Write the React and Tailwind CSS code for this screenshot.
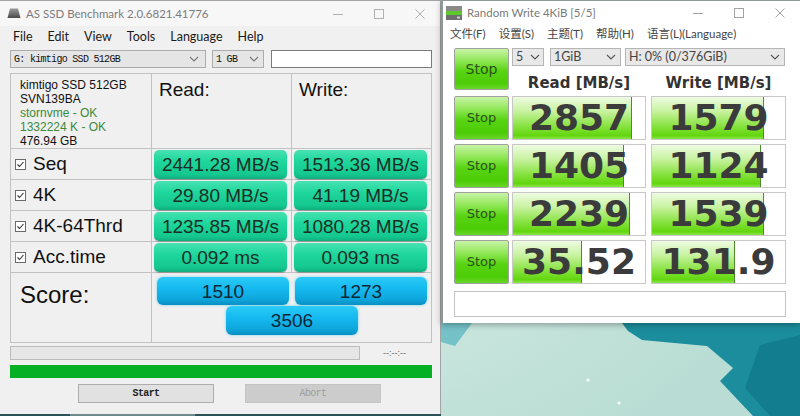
import React from "react";

const SEG = "font-['Lato','Noto_Sans_CJK_SC',sans-serif]";
const ARIAL = "font-['Liberation_Sans',Arial,sans-serif]";
const MONO = "font-['Liberation_Mono','DejaVu_Sans_Mono',monospace]";
const DJV = "font-['DejaVu_Sans',Verdana,sans-serif]";

const Chevron = ({ c = "#555" }) => (
  <svg width="10" height="6" viewBox="0 0 10 6">
    <path d="M1 1l4 4 4-4" fill="none" stroke={c} strokeWidth="1.1" />
  </svg>
);

const Controls = ({ c }) => (
  <div className="ml-auto flex h-full items-center">
    <div className="flex w-[41px] justify-center">
      <svg width="10" height="10" viewBox="0 0 10 10">
        <path d="M0 5.5h10" stroke={c} strokeWidth="1" />
      </svg>
    </div>
    <div className="flex w-[41px] justify-center">
      <svg width="10" height="10" viewBox="0 0 10 10">
        <rect x="0.5" y="0.5" width="9" height="9" fill="none" stroke={c} strokeWidth="1" />
      </svg>
    </div>
    <div className="flex w-[41px] justify-center">
      <svg width="10" height="10" viewBox="0 0 10 10">
        <path d="M0.5 0.5l9 9M9.5 0.5l-9 9" stroke={c} strokeWidth="1" />
      </svg>
    </div>
  </div>
);

const CheckBox = () => (
  <svg width="11" height="11" viewBox="0 0 11 11">
    <rect x="0.5" y="0.5" width="10" height="10" fill="#fff" stroke="#6a6a6a" />
    <path d="M2.5 5.5l2 2 4-4.5" fill="none" stroke="#333" strokeWidth="1.1" />
  </svg>
);

const GreenPill = ({ children }) => (
  <div
    className={`ml-[2px] flex h-[29px] w-[133px] items-center justify-center rounded-[5px] bg-[linear-gradient(to_bottom,#46e2b2,#1ed69b_40%,#14c78e_85%,#0fae7c)] text-[19px] leading-none text-[#1a2e26] shadow-[0_1px_1px_rgba(0,0,0,0.25)] ${ARIAL}`}
  >
    {children}
  </div>
);

const BluePill = ({ children, className = "" }) => (
  <div
    className={`flex h-[28px] w-[132px] items-center justify-center rounded-[6px] bg-[linear-gradient(to_bottom,#2acbf7,#14b8ee_45%,#0ea6dc_80%,#0a8fc2)] text-[19px] leading-none text-[#0e2638] shadow-[0_0_3px_rgba(40,190,240,0.6)] ${ARIAL} ${className}`}
  >
    {children}
  </div>
);

const rows = [
  ["Seq", "2441.28 MB/s", "1513.36 MB/s"],
  ["4K", "29.80 MB/s", "41.19 MB/s"],
  ["4K-64Thrd", "1235.85 MB/s", "1080.28 MB/s"],
  ["Acc.time", "0.092 ms", "0.093 ms"],
];

function LeftWindow() {
  return (
    <div className="flex h-[414px] w-[441px] shrink-0 flex-col border-r border-t border-[#a3a3a3] bg-[#f0f0f0]">
      <div className={`flex h-[25px] shrink-0 items-center bg-[#f7f7f7] ${SEG}`}>
        <svg className="ml-[7px]" width="14" height="11" viewBox="0 0 14 11">
          <defs>
            <linearGradient id="lg1" x1="0" y1="0" x2="0" y2="1">
              <stop offset="0" stopColor="#9a9a9a" />
              <stop offset="1" stopColor="#4a4a4a" />
            </linearGradient>
          </defs>
          <path d="M3 0.5h8l2.5 9.5H0.5z" fill="url(#lg1)" />
        </svg>
        <span className="ml-[5px] text-[11.5px] text-[#7c7c7c]">AS SSD Benchmark 2.0.6821.41776</span>
        <Controls c="#b0b0b0" />
      </div>
      <div className={`flex h-[22px] shrink-0 items-center gap-[15px] pl-[13px] text-[12.5px] text-[#1a1a1a] ${SEG}`}>
        <span>File</span>
        <span>Edit</span>
        <span>View</span>
        <span>Tools</span>
        <span>Language</span>
        <span>Help</span>
      </div>
      <div className="ml-[10px] mt-[2px] flex h-[18px] shrink-0">
        <div className={`flex w-[196px] items-center border border-[#acacac] bg-[#e5e5e5] pl-[3px] pr-[6px] text-[10px] tracking-[-0.7px] text-[#111] ${MONO}`}>
          <span>G: kimtigo SSD 512GB</span>
          <span className="ml-auto">
            <Chevron c="#777" />
          </span>
        </div>
        <div className={`ml-[6px] flex w-[52px] items-center border border-[#acacac] bg-[#e5e5e5] pl-[3px] pr-[4px] text-[10px] tracking-[-0.7px] text-[#111] ${MONO}`}>
          <span>1 GB</span>
          <span className="ml-auto">
            <Chevron c="#777" />
          </span>
        </div>
        <div className="ml-[7px] w-[161px] border border-[#7a7a7a] bg-white" />
      </div>
      <div className={`ml-[10px] mt-[5px] flex h-[270px] w-[422px] shrink-0 flex-col border border-[#c2c2c2] ${ARIAL}`}>
        <div className="flex h-[75px] shrink-0 border-b border-[#c2c2c2]">
          <div className="w-[141px] border-r border-[#c2c2c2] pl-[9px] pt-[4px] text-[12px] leading-[14px] text-[#111]">
            <div>kimtigo SSD 512GB</div>
            <div>SVN139BA</div>
            <div className="text-[#3a8a3a]">stornvme - OK</div>
            <div className="text-[#3a8a3a]">1332224 K - OK</div>
            <div>476.94 GB</div>
          </div>
          <div className="w-[140px] border-r border-[#c2c2c2] pl-[7px] pt-[2px] text-[19px] text-[#111]">Read:</div>
          <div className="flex-1 pl-[7px] pt-[2px] text-[19px] text-[#111]">Write:</div>
        </div>
        {rows.map(([l, r, w]) => (
          <div key={l} className="flex h-[31px] shrink-0 border-b border-[#c2c2c2]">
            <div className="flex w-[141px] items-center gap-[7px] border-r border-[#c2c2c2] pl-[4px] text-[19px] text-[#111]">
              <CheckBox />
              <span>{l}</span>
            </div>
            <div className="flex w-[140px] items-center border-r border-[#c2c2c2]">
              <GreenPill>{r}</GreenPill>
            </div>
            <div className="flex flex-1 items-center">
              <GreenPill>{w}</GreenPill>
            </div>
          </div>
        ))}
        <div className="flex flex-1">
          <div className="w-[141px] border-r border-[#c2c2c2] pl-[9px] pt-[4px] text-[24px] text-[#111]">Score:</div>
          <div className="flex flex-1 flex-col pl-[5px] pt-[4px]">
            <div className="flex gap-[6px]">
              <BluePill>1510</BluePill>
              <BluePill>1273</BluePill>
            </div>
            <BluePill className="ml-[69px] mt-[1px] h-[29px]">3506</BluePill>
          </div>
        </div>
      </div>
      <div className="ml-[10px] mt-[3px] flex h-[14px] shrink-0 items-center">
        <div className="h-full w-[350px] border border-[#bcbcbc] bg-[#e6e6e6]" />
        <span className={`ml-[23px] text-[9px] leading-none text-[#666] ${ARIAL}`}>--:--:--</span>
      </div>
      <div className="ml-[10px] mt-[5px] h-[13px] w-[422px] shrink-0 bg-[#06b025]" />
      <div className={`mt-[6px] flex h-[19px] shrink-0 ${MONO}`}>
        <div className="ml-[78px] flex w-[136px] items-center justify-center border border-[#adadad] bg-[#e1e1e1] text-[10px] font-bold tracking-[-0.6px] text-[#222]">
          Start
        </div>
        <div className="ml-[31px] flex w-[136px] items-center justify-center border border-[#c4c4c4] bg-[#cccccc] text-[10px] tracking-[-0.6px] text-[#9c9c9c]">
          Abort
        </div>
      </div>
    </div>
  );
}

const StopBtn = ({ className = "", text = "text-[13px]" }) => (
  <div
    className={`flex w-[55px] shrink-0 items-center justify-center rounded-[2px] border border-[#a0a0a0] bg-[linear-gradient(to_bottom,#c8f4a8,#8ee654_30%,#58d412_55%,#4ccc06_85%,#6ad82a)] ${DJV} ${text} text-[#2a5219] ${className}`}
  >
    Stop
  </div>
);

const ResultBox = ({ value, fill, w }) => (
  <div className="relative h-full overflow-hidden border border-[#c8c8c8] bg-white" style={{ width: w }}>
    <div
      className="absolute bottom-0 left-0 top-0 border-r border-[#4e8a2e] bg-[linear-gradient(to_bottom,#eefbe2,#c6f29e_35%,#86e23e_70%,#62d60e_92%,#8ee64e)]"
      style={{ width: fill }}
    />
    <div className={`relative flex h-full items-center justify-center text-[36px] font-bold leading-none text-[#3b3b3b] ${DJV}`}>
      {value}
    </div>
  </div>
);

const cdm = [
  ["2857", 119, "1579", 112],
  ["1405", 111, "1124", 109],
  ["2239", 117, "1539", 112],
  ["35.52", 69, "131.9", 83],
];

function RightWindow() {
  return (
    <div className="flex h-[323px] w-[359px] shrink-0 flex-col border-l-2 border-t border-[#8e9a9a] bg-white shadow-[0_2px_6px_rgba(0,0,0,0.3)]">
      <div className={`flex h-[23px] shrink-0 items-center ${SEG}`}>
        <svg className="ml-[3px]" width="16" height="14" viewBox="0 0 16 14">
          <rect x="0" y="0" width="16" height="5" fill="#8a8a8a" />
          <rect x="0" y="5" width="16" height="4" fill="#5ec92a" />
          <rect x="0" y="9" width="16" height="5" fill="#6e6e6e" />
          <rect x="11" y="10.5" width="3" height="2" fill="#cfcfcf" />
        </svg>
        <span className="ml-[5px] text-[11.5px] text-[#7a7a7a]">Random Write 4KiB [5/5]</span>
        <Controls c="#a4a4a4" />
      </div>
      <div className={`flex h-[19px] shrink-0 items-center gap-[13px] pl-[7px] text-[11.5px] text-[#444] ${SEG}`}>
        <span>文件(F)</span>
        <span>设置(S)</span>
        <span>主题(T)</span>
        <span>帮助(H)</span>
        <span>语言(L)(Language)</span>
      </div>
      <div className="ml-[11px] mt-[5px] flex shrink-0 flex-col">
        <div className="flex h-[48px]">
          <StopBtn className="h-[42px]" text="text-[14px]" />
          <div className="ml-[3px] flex flex-col">
            <div className={`flex h-[18px] text-[12.5px] text-[#444] ${SEG}`}>
              <div className="flex w-[32px] items-center border border-[#b5b5b5] bg-[#e8e8e8] pl-[3px] pr-[3px]">
                <span>5</span>
                <span className="ml-auto"><Chevron c="#555" /></span>
              </div>
              <div className="ml-[6px] flex w-[71px] items-center border border-[#b5b5b5] bg-[#e8e8e8] pl-[3px] pr-[4px]">
                <span>1GiB</span>
                <span className="ml-auto"><Chevron c="#555" /></span>
              </div>
              <div className="ml-[4px] flex w-[160px] items-center border border-[#b5b5b5] bg-[#e8e8e8] pl-[3px] pr-[4px]">
                <span>H: 0% (0/376GiB)</span>
                <span className="ml-auto"><Chevron c="#555" /></span>
              </div>
            </div>
            <div className={`flex h-[30px] gap-[5px] pt-[9px] text-[15px] font-bold leading-[16px] text-[#333] ${DJV}`}>
              <div className="w-[134px] text-center">Read [MB/s]</div>
              <div className="w-[135px] text-center">Write [MB/s]</div>
            </div>
          </div>
        </div>
        <div className="flex flex-col gap-[4px]">
          {cdm.map(([r, rf, w, wf], i) => (
            <div key={i} className="flex h-[44px]">
              <StopBtn className="h-full" />
              <div className="ml-[3px] h-full">
                <ResultBox value={r} fill={rf} w={134} />
              </div>
              <div className="ml-[5px] h-full">
                <ResultBox value={w} fill={wf} w={135} />
              </div>
            </div>
          ))}
        </div>
        <div className="mt-[7px] h-[26px] w-[332px] border border-[#c4c4c4] bg-white" />
      </div>
    </div>
  );
}

export default function App() {
  return (
    <div className="relative h-[416px] w-[800px] overflow-hidden bg-[#c3e2d9]">
      <svg className="absolute inset-0" width="800" height="416" viewBox="0 0 800 416">
        <defs>
          <radialGradient id="wp" cx="0.35" cy="0.6" r="0.6">
            <stop offset="0" stopColor="#d6ede4" />
            <stop offset="1" stopColor="#b9ddd4" />
          </radialGradient>
          <linearGradient id="strip" x1="0" y1="0" x2="0" y2="1">
            <stop offset="0" stopColor="#8c9696" />
            <stop offset="1" stopColor="#4f8f96" />
          </linearGradient>
        </defs>
        <rect x="0" y="0" width="800" height="416" fill="url(#wp)" />
        <rect x="436" y="0" width="10" height="330" fill="url(#strip)" />
        <polygon points="441,323 472,323 455,346 441,342" fill="#74c1c7" />
        <polygon
          points="622,323 800,323 800,416 753,416 720,381 733,368 707,346 642,340 628,331"
          fill="#1b8d9c"
        />
        <polygon points="760,345 800,335 800,416 770,416 745,388" fill="#127d8e" />
        <circle cx="588" cy="380" r="1.6" fill="#ffffff" />
        <circle cx="619" cy="403" r="1.6" fill="#ffffff" />
        <rect x="0" y="413" width="441" height="3" fill="#2c5359" />
        <rect x="70" y="414" width="125" height="2" fill="#6e8a8c" />
      </svg>
      <div className="relative flex items-start">
        <LeftWindow />
        <RightWindow />
      </div>
    </div>
  );
}
